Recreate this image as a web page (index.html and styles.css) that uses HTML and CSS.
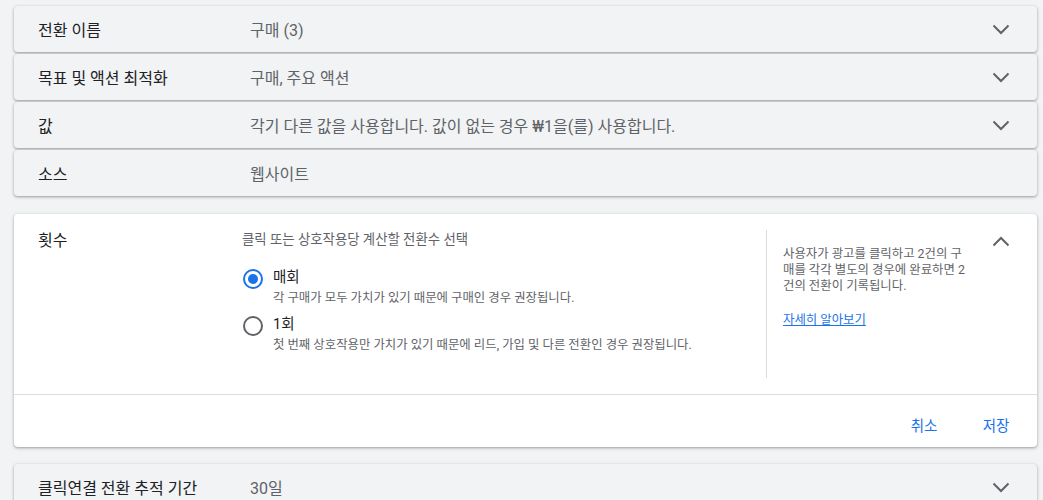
FILE: index.html
```html
<!DOCTYPE html>
<html lang="ko">
<head>
<meta charset="utf-8">
<link rel="stylesheet" href="styles.css">
</head>
<body>
<main class="page">
  <div class="group">
    <section class="row">
      <div class="row-label">전환 이름</div>
      <div class="row-value">구매 (3)</div>
      <svg class="chev" viewBox="0 0 24 24"><polyline points="4.5,8.5 12,16 19.5,8.5"/></svg>
    </section>
    <section class="row">
      <div class="row-label">목표 및 액션 최적화</div>
      <div class="row-value">구매, 주요 액션</div>
      <svg class="chev" viewBox="0 0 24 24"><polyline points="4.5,8.5 12,16 19.5,8.5"/></svg>
    </section>
    <section class="row">
      <div class="row-label">값</div>
      <div class="row-value">각기 다른 값을 사용합니다. 값이 없는 경우 ₩1을(를) 사용합니다.</div>
      <svg class="chev" viewBox="0 0 24 24"><polyline points="4.5,8.5 12,16 19.5,8.5"/></svg>
    </section>
    <section class="row">
      <div class="row-label">소스</div>
      <div class="row-value">웹사이트</div>
    </section>
  </div>

  <section class="card">
    <div class="card-top">
      <div class="card-label">횟수</div>
      <div class="card-main">
        <div class="subtitle">클릭 또는 상호작용당 계산할 전환수 선택</div>
        <div class="options">
          <div class="option">
            <span class="radio checked"></span>
            <div class="option-text">
              <div class="option-title">매회</div>
              <div class="option-desc">각 구매가 모두 가치가 있기 때문에 구매인 경우 권장됩니다.</div>
            </div>
          </div>
          <div class="option">
            <span class="radio"></span>
            <div class="option-text">
              <div class="option-title">1회</div>
              <div class="option-desc">첫 번째 상호작용만 가치가 있기 때문에 리드, 가입 및 다른 전환인 경우 권장됩니다.</div>
            </div>
          </div>
        </div>
      </div>
      <aside class="card-aside">
        <p class="aside-text">사용자가 광고를 클릭하고 2건의 구매를 각각 별도의 경우에 완료하면 2건의 전환이 기록됩니다.</p>
        <a class="aside-link" href="#">자세히 알아보기</a>
      </aside>
      <svg class="chev up" viewBox="0 0 24 24"><polyline points="4.5,15.5 12,8 19.5,15.5"/></svg>
    </div>
    <div class="card-actions">
      <button class="btn">취소</button>
      <button class="btn">저장</button>
    </div>
  </section>

  <section class="row">
    <div class="row-label">클릭연결 전환 추적 기간</div>
    <div class="row-value">30일</div>
    <svg class="chev" viewBox="0 0 24 24"><polyline points="4.5,8.5 12,16 19.5,8.5"/></svg>
  </section>
</main>
</body>
</html>
```
FILE: styles.css
```css
html, body {
  margin: 0;
  padding: 0;
  background: #f1f3f4;
  font-family: "Roboto", "Noto Sans CJK KR", sans-serif;
  color: #202124;
}
.page {
  padding: 6px 6px 0 14px;
  display: flex;
  flex-direction: column;
  gap: 17px;
}
.group {
  display: flex;
  flex-direction: column;
  gap: 2px;
  margin-bottom: 1px;
}
.row {
  display: flex;
  align-items: center;
  height: 46px;
  padding: 0 24px;
  background: #f1f3f4;
  border-radius: 4px;
  box-shadow: 0 1px 2px 0 rgba(60,64,67,.3), 0 1px 3px 1px rgba(60,64,67,.15);
}
.row-label {
  width: 212px;
  flex: none;
  font-size: 16px;
  color: #202124;
}
.row-value {
  flex: 1;
  font-size: 16px;
  color: #5f6368;
}
.chev {
  width: 24px;
  height: 24px;
  flex: none;
  fill: none;
  stroke: #5f6368;
  stroke-width: 2;
}
.card {
  background: #fff;
  border-radius: 4px;
  box-shadow: 0 1px 2px 0 rgba(60,64,67,.3), 0 1px 3px 1px rgba(60,64,67,.15);
}
.card-top {
  display: flex;
  padding: 16px 24px;
  border-bottom: 1px solid #dadce0;
}
.card-label {
  width: 204px;
  flex: none;
  font-size: 16px;
  line-height: 22px;
}
.card-main {
  flex: 1;
}
.subtitle {
  font-size: 13.4px;
  line-height: 20px;
  color: #5f6368;
}
.options {
  margin-top: 16px;
  display: flex;
  flex-direction: column;
  gap: 7px;
}
.option {
  display: flex;
  gap: 10px;
}
.radio {
  width: 20px;
  height: 20px;
  box-sizing: border-box;
  border: 2px solid #5f6368;
  border-radius: 50%;
  margin: 3px 0 0 1px;
  flex: none;
  display: flex;
  align-items: center;
  justify-content: center;
}
.radio.checked {
  border-color: #1a73e8;
}
.radio.checked::after {
  content: "";
  width: 10px;
  height: 10px;
  border-radius: 50%;
  background: #1a73e8;
}
.option-title {
  font-size: 14.5px;
  line-height: 24px;
  color: #202124;
}
.option-desc {
  font-size: 12.4px;
  line-height: 16px;
  color: #5f6368;
}
.card-aside {
  width: 182px;
  flex: none;
  border-left: 1px solid #dadce0;
  padding: 16px 24px 0 16px;
  min-height: 132px;
}
.aside-text {
  margin: 0 0 15px;
  font-size: 12.4px;
  line-height: 16px;
  color: #5f6368;
}
.aside-link {
  font-size: 12.4px;
  line-height: 16px;
  color: #1a73e8;
  text-decoration: underline;
}
.card-actions {
  display: flex;
  justify-content: flex-end;
  gap: 8px;
  height: 52px;
  box-sizing: border-box;
  align-items: flex-end;
  padding: 0 9px 5px 0;
}
.btn {
  min-width: 64px;
  height: 36px;
  border: none;
  background: transparent;
  color: #1a73e8;
  font-family: inherit;
  font-size: 14.5px;
  padding: 0 8px;
  cursor: pointer;
}
```
